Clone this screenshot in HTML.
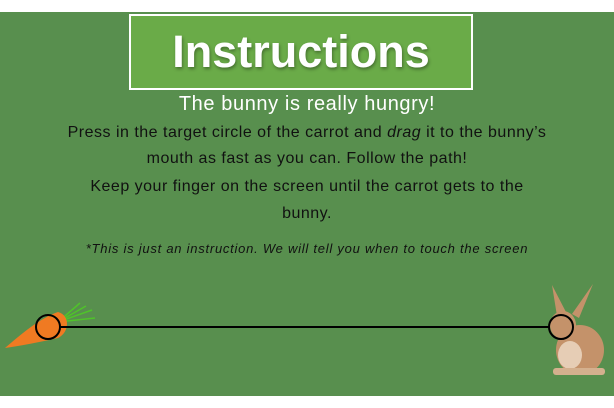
<!DOCTYPE html>
<html><head><meta charset="utf-8"><style>
html,body{margin:0;padding:0;width:614px;height:408px;overflow:hidden;background:#fff;font-family:"Liberation Sans",sans-serif}
.bg{position:absolute;left:0;top:12px;width:614px;height:384px;background:#588f4e}
.box{position:absolute;left:129px;top:14px;width:340px;height:72px;border:2px solid #fff;background:#6aab48}
.box div{position:absolute;left:0;right:0;top:8px;text-align:center;color:#fff;font-weight:bold;font-size:45px;letter-spacing:0px;text-shadow:1px 2px 3px rgba(0,0,0,.35);line-height:56px}
.l{position:absolute;left:0;width:614px;text-align:center;color:#111;white-space:nowrap;letter-spacing:0.5px}
</style></head><body>
<div class="bg"></div>
<div class="box"><div>Instructions</div></div>
<div class="l" style="top:93px;font-size:20px;color:#fff;letter-spacing:0.6px">The bunny is really hungry!</div>
<div class="l" style="top:124px;font-size:16px">Press in the target circle of the carrot and <i>drag</i> it to the bunny’s</div>
<div class="l" style="top:150px;font-size:16px">mouth as fast as you can. Follow the path!</div>
<div class="l" style="top:178px;font-size:16px">Keep your finger on the screen until the carrot gets to the</div>
<div class="l" style="top:205px;font-size:16px">bunny.</div>
<div class="l" style="top:241px;font-size:13px;font-style:italic;letter-spacing:0.75px">*This is just an instruction. We will tell you when to touch the screen</div>
<svg style="position:absolute;left:0;top:0" width="614" height="408">
<g stroke="#4fc32a" stroke-width="1.5"><path d="M58 322 L80 303 M58 322 L92 310 M58 322 L95 318 M58 322 L86 306"/></g>
<path d="M5 348 C20 335 40 318 58 312 C70 315 70 332 58 338 C40 342 20 346 5 348Z" fill="#f07a22"/>
<g fill="#c4926a">
<ellipse cx="580" cy="350" rx="24" ry="25"/>
<ellipse cx="563" cy="325" rx="13" ry="14"/>
<path d="M552 285 L557 316 L567 314Z M593 284 L572 314 L579 318Z"/>
</g>
<ellipse cx="570" cy="355" rx="12" ry="14" fill="#e6cdb5"/>
<rect x="553" y="368" width="52" height="7" rx="3" fill="#d4b08e"/>
<line x1="60" y1="327" x2="549" y2="327" stroke="#000" stroke-width="2"/>
<circle cx="48" cy="327" r="12" fill="none" stroke="#000" stroke-width="2"/>
<circle cx="561" cy="327" r="12" fill="none" stroke="#000" stroke-width="2"/>
</svg>
</body></html>
